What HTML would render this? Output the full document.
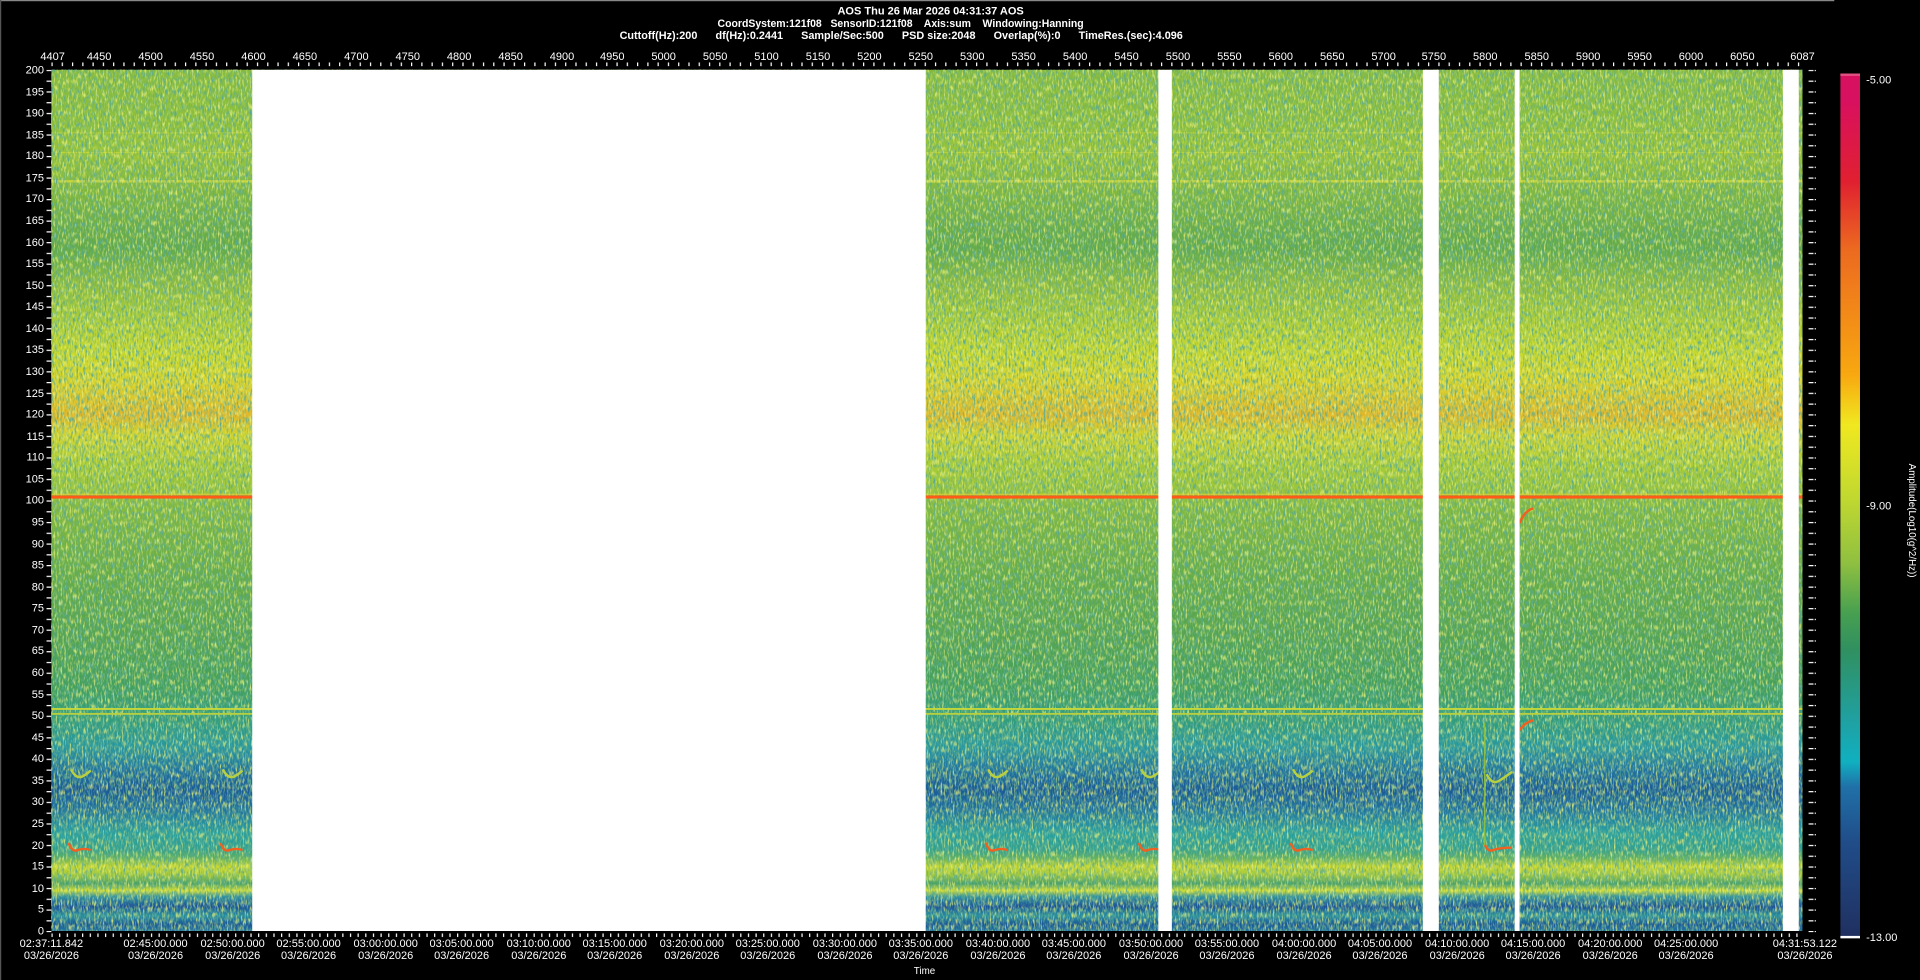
<!DOCTYPE html>
<html><head><meta charset="utf-8"><style>
html,body{margin:0;padding:0;background:#000;overflow:hidden}
svg{display:block}
text{font-family:"Liberation Sans",sans-serif;fill:#fff}
.h{font-size:9px;font-weight:bold}
.a{font-size:9px}
</style></head><body>
<svg width="1920" height="980" viewBox="0 0 1568 800" preserveAspectRatio="none" xmlns="http://www.w3.org/2000/svg">
<defs>
<linearGradient id="sp" x1="0" y1="57" x2="0" y2="760" gradientUnits="userSpaceOnUse">
<stop offset="0" stop-color="#88bc40"/>
<stop offset="0.061" stop-color="#8ec03c"/>
<stop offset="0.097" stop-color="#98c43a"/>
<stop offset="0.188" stop-color="#68ac48"/>
<stop offset="0.209" stop-color="#62aa48"/>
<stop offset="0.246" stop-color="#8cbc40"/>
<stop offset="0.288" stop-color="#a8cc38"/>
<stop offset="0.331" stop-color="#c8d82c"/>
<stop offset="0.360" stop-color="#d8d42a"/>
<stop offset="0.401" stop-color="#e0b82c"/>
<stop offset="0.424" stop-color="#d0d430"/>
<stop offset="0.459" stop-color="#a8cc38"/>
<stop offset="0.488" stop-color="#98c43c"/>
<stop offset="0.509" stop-color="#84ba40"/>
<stop offset="0.587" stop-color="#66ac48"/>
<stop offset="0.658" stop-color="#56a450"/>
<stop offset="0.715" stop-color="#44a05c"/>
<stop offset="0.758" stop-color="#309c80"/>
<stop offset="0.786" stop-color="#2898a0"/>
<stop offset="0.815" stop-color="#2070a0"/>
<stop offset="0.836" stop-color="#1a5a98"/>
<stop offset="0.858" stop-color="#2070a0"/>
<stop offset="0.886" stop-color="#28a0a0"/>
<stop offset="0.905" stop-color="#30a090"/>
<stop offset="0.915" stop-color="#60b060"/>
<stop offset="0.925" stop-color="#c8d830"/>
<stop offset="0.935" stop-color="#a0c840"/>
<stop offset="0.945" stop-color="#48a068"/>
<stop offset="0.953" stop-color="#d8e030"/>
<stop offset="0.960" stop-color="#3090a0"/>
<stop offset="0.972" stop-color="#1a5098"/>
<stop offset="0.982" stop-color="#2890a0"/>
<stop offset="0.992" stop-color="#1a5898"/>
<stop offset="1" stop-color="#2070a0"/>
</linearGradient>
<linearGradient id="cb" x1="0" y1="0" x2="0" y2="1">
<stop offset="0" stop-color="#d81060"/>
<stop offset="0.03" stop-color="#d81060"/>
<stop offset="0.125" stop-color="#e02030"/>
<stop offset="0.204" stop-color="#ec6a20"/>
<stop offset="0.349" stop-color="#f8a810"/>
<stop offset="0.407" stop-color="#f0e820"/>
<stop offset="0.493" stop-color="#c0d830"/>
<stop offset="0.566" stop-color="#90c040"/>
<stop offset="0.624" stop-color="#48a050"/>
<stop offset="0.667" stop-color="#309060"/>
<stop offset="0.747" stop-color="#20a0a0"/>
<stop offset="0.797" stop-color="#10b0c0"/>
<stop offset="0.826" stop-color="#2070a8"/>
<stop offset="0.892" stop-color="#204c88"/>
<stop offset="1" stop-color="#203060"/>
</linearGradient>
<filter id="nd" x="0" y="0" width="100%" height="100%">
<feTurbulence type="fractalNoise" baseFrequency="0.7 0.22" numOctaves="2" seed="4"/>
<feColorMatrix values="0 0 0 0 0.1  0 0 0 0 0.4  0 0 0 0 0.3  0 0 0 3 -1.35"/>
</filter>
<filter id="nl" x="0" y="0" width="100%" height="100%">
<feTurbulence type="fractalNoise" baseFrequency="0.7 0.2" numOctaves="2" seed="11"/>
<feColorMatrix values="0 0 0 0 0.85  0 0 0 0 0.9  0 0 0 0 0.2  0 0 0 3 -1.45"/>
</filter>
<pattern id="yt" x="0" y="57" width="6" height="8.7875" patternUnits="userSpaceOnUse"><rect x="2" y="0" width="4" height="1" fill="#fff"/></pattern>
<pattern id="xt" x="42" y="0" width="8.39" height="6" patternUnits="userSpaceOnUse"><rect x="0" y="3" width="1" height="3" fill="#fff"/></pattern>
<pattern id="bt" x="42" y="0" width="6.25" height="6" patternUnits="userSpaceOnUse"><rect x="0" y="0" width="1" height="3" fill="#fff"/></pattern>
<pattern id="rt" x="0" y="57" width="6" height="8.7875" patternUnits="userSpaceOnUse"><rect x="0" y="0" width="5" height="1" fill="#fff"/></pattern>
</defs>
<rect width="1568" height="800" fill="#000"/>
<rect x="0" y="0" width="1498" height="1" fill="#888"/>
<rect x="0" y="0" width="1" height="800" fill="#555"/>

<text class="h" x="760" y="12" text-anchor="middle">AOS  Thu 26 Mar 2026 04:31:37  AOS</text>
<text class="h" x="586" y="22" textLength="299" lengthAdjust="spacingAndGlyphs" xml:space="preserve">CoordSystem:121f08   SensorID:121f08    Axis:sum    Windowing:Hanning</text>
<text class="h" x="506" y="32" textLength="460" lengthAdjust="spacingAndGlyphs" xml:space="preserve">Cuttoff(Hz):200      df(Hz):0.2441      Sample/Sec:500      PSD size:2048      Overlap(%):0      TimeRes.(sec):4.096</text>

<rect x="42" y="57" width="1430" height="703" fill="url(#sp)"/>
<rect x="42" y="147" width="1430" height="2" fill="#e0e040" opacity=".7"/>
<rect x="42" y="108" width="1430" height="1" fill="#c8d838" opacity=".6"/>
<rect x="42" y="124" width="1430" height="1" fill="#d0dc30" opacity=".6"/>
<rect x="42" y="57" width="1430" height="703" filter="url(#nd)"/>
<rect x="42" y="57" width="1430" height="703" filter="url(#nl)" opacity=".8"/>
<rect x="42" y="403" width="1430" height="1" fill="#e8d030" opacity=".7"/>
<rect x="42" y="404.5" width="1430" height="2.5" fill="#ff5a18"/>
<rect x="42" y="578" width="1430" height="1.5" fill="#c8d838"/>
<rect x="42" y="582" width="1430" height="1.5" fill="#b8d040"/>
<g fill="none" stroke-width="2">
<path d="M56 688 q3 8 7 6 q6 -2 11 0" stroke="#f06020"/>
<path d="M180 688 q3 8 7 6 q6 -2 11 0" stroke="#f06020"/>
<path d="M805 688 q3 8 7 6 q6 -2 11 0" stroke="#f06020"/>
<path d="M930 688 q3 8 7 6 q6 -2 11 0" stroke="#f06020"/>
<path d="M1054 688 q3 8 7 6 q6 -2 11 0" stroke="#f06020"/>
<path d="M1212 688 q3 8 7 6 q6 -2 15 -2" stroke="#f06020"/>
<path d="M58 628 q4 8 9 6 q4 -2 7 -5" stroke="#b8d040"/>
<path d="M182 628 q4 8 9 6 q4 -2 7 -5" stroke="#b8d040"/>
<path d="M807 628 q4 8 9 6 q4 -2 7 -5" stroke="#b8d040"/>
<path d="M932 628 q4 8 9 6 q4 -2 7 -5" stroke="#b8d040"/>
<path d="M1056 628 q4 8 9 6 q4 -2 7 -5" stroke="#b8d040"/>
<path d="M1214 632 q4 8 9 6 q4 -2 12 -8" stroke="#b8d040"/>
<path d="M1241 427 q4 -10 11 -12" stroke="#f06020"/>
<path d="M1241 596 q4 -6 11 -8" stroke="#f06020"/>
</g>
<rect x="1212" y="590" width="1" height="100" fill="#90c040"/>
<rect x="206" y="57" width="550" height="703" fill="#fff"/>
<rect x="946" y="57" width="11" height="703" fill="#fff"/>
<rect x="1162" y="57" width="13" height="703" fill="#fff"/>
<rect x="1237" y="57" width="4" height="703" fill="#fff"/>
<rect x="1456" y="57" width="13" height="703" fill="#fff"/>

<rect x="36" y="57" width="6" height="704" fill="url(#yt)"/>
<rect x="42" y="50" width="1431" height="6" fill="url(#xt)"/>
<rect x="42" y="761" width="1431" height="4" fill="url(#bt)"/>
<rect x="1477" y="57" width="6" height="704" fill="url(#rt)"/>

<g class="a" text-anchor="end">
<text x="36" y="60">200</text><text x="36" y="78">195</text><text x="36" y="95">190</text><text x="36" y="113">185</text><text x="36" y="130">180</text><text x="36" y="148">175</text><text x="36" y="165">170</text><text x="36" y="183">165</text><text x="36" y="201">160</text><text x="36" y="218">155</text><text x="36" y="236">150</text><text x="36" y="253">145</text><text x="36" y="271">140</text><text x="36" y="288">135</text><text x="36" y="306">130</text><text x="36" y="324">125</text><text x="36" y="341">120</text><text x="36" y="359">115</text><text x="36" y="376">110</text><text x="36" y="394">105</text><text x="36" y="411">100</text><text x="36" y="429">95</text><text x="36" y="447">90</text><text x="36" y="464">85</text><text x="36" y="482">80</text><text x="36" y="499">75</text><text x="36" y="517">70</text><text x="36" y="534">65</text><text x="36" y="552">60</text><text x="36" y="570">55</text><text x="36" y="587">50</text><text x="36" y="605">45</text><text x="36" y="622">40</text><text x="36" y="640">35</text><text x="36" y="657">30</text><text x="36" y="675">25</text><text x="36" y="693">20</text><text x="36" y="710">15</text><text x="36" y="728">10</text><text x="36" y="745">5</text><text x="36" y="763">0</text>
</g>
<g class="a" text-anchor="middle">
<text x="43" y="49">4407</text><text x="81" y="49">4450</text><text x="123" y="49">4500</text><text x="165" y="49">4550</text><text x="207" y="49">4600</text><text x="249" y="49">4650</text><text x="291" y="49">4700</text><text x="333" y="49">4750</text><text x="375" y="49">4800</text><text x="417" y="49">4850</text><text x="459" y="49">4900</text><text x="500" y="49">4950</text><text x="542" y="49">5000</text><text x="584" y="49">5050</text><text x="626" y="49">5100</text><text x="668" y="49">5150</text><text x="710" y="49">5200</text><text x="752" y="49">5250</text><text x="794" y="49">5300</text><text x="836" y="49">5350</text><text x="878" y="49">5400</text><text x="920" y="49">5450</text><text x="962" y="49">5500</text><text x="1004" y="49">5550</text><text x="1046" y="49">5600</text><text x="1088" y="49">5650</text><text x="1130" y="49">5700</text><text x="1171" y="49">5750</text><text x="1213" y="49">5800</text><text x="1255" y="49">5850</text><text x="1297" y="49">5900</text><text x="1339" y="49">5950</text><text x="1381" y="49">6000</text><text x="1423" y="49">6050</text><text x="1472" y="49">6087</text>
</g>
<g class="a" text-anchor="middle">
<text x="42" y="773">02:37:11.842</text><text x="42" y="783">03/26/2026</text>
<text x="127" y="773">02:45:00.000</text><text x="127" y="783">03/26/2026</text>
<text x="190" y="773">02:50:00.000</text><text x="190" y="783">03/26/2026</text>
<text x="252" y="773">02:55:00.000</text><text x="252" y="783">03/26/2026</text>
<text x="315" y="773">03:00:00.000</text><text x="315" y="783">03/26/2026</text>
<text x="377" y="773">03:05:00.000</text><text x="377" y="783">03/26/2026</text>
<text x="440" y="773">03:10:00.000</text><text x="440" y="783">03/26/2026</text>
<text x="502" y="773">03:15:00.000</text><text x="502" y="783">03/26/2026</text>
<text x="565" y="773">03:20:00.000</text><text x="565" y="783">03/26/2026</text>
<text x="627" y="773">03:25:00.000</text><text x="627" y="783">03/26/2026</text>
<text x="690" y="773">03:30:00.000</text><text x="690" y="783">03/26/2026</text>
<text x="752" y="773">03:35:00.000</text><text x="752" y="783">03/26/2026</text>
<text x="815" y="773">03:40:00.000</text><text x="815" y="783">03/26/2026</text>
<text x="877" y="773">03:45:00.000</text><text x="877" y="783">03/26/2026</text>
<text x="940" y="773">03:50:00.000</text><text x="940" y="783">03/26/2026</text>
<text x="1002" y="773">03:55:00.000</text><text x="1002" y="783">03/26/2026</text>
<text x="1065" y="773">04:00:00.000</text><text x="1065" y="783">03/26/2026</text>
<text x="1127" y="773">04:05:00.000</text><text x="1127" y="783">03/26/2026</text>
<text x="1190" y="773">04:10:00.000</text><text x="1190" y="783">03/26/2026</text>
<text x="1252" y="773">04:15:00.000</text><text x="1252" y="783">03/26/2026</text>
<text x="1315" y="773">04:20:00.000</text><text x="1315" y="783">03/26/2026</text>
<text x="1377" y="773">04:25:00.000</text><text x="1377" y="783">03/26/2026</text>
<text x="1474" y="773">04:31:53.122</text><text x="1474" y="783">03/26/2026</text>
<text x="755" y="795" style="font-size:8px">Time</text>
</g>

<rect x="1503" y="60" width="16" height="705" fill="url(#cb)"/>
<rect x="1503" y="60" width="16" height="2" fill="#e05080"/>
<rect x="1503" y="764" width="16" height="2" fill="#fff"/>
<text class="a" x="1524" y="68">-5.00</text>
<text class="a" x="1524" y="416">-9.00</text>
<text class="a" x="1524" y="768">-13.00</text>
<text class="a" transform="translate(1559,425) rotate(90)" text-anchor="middle" style="font-size:8px">Amplitude(Log10(g^2/Hz))</text>
</svg>
</body></html>
